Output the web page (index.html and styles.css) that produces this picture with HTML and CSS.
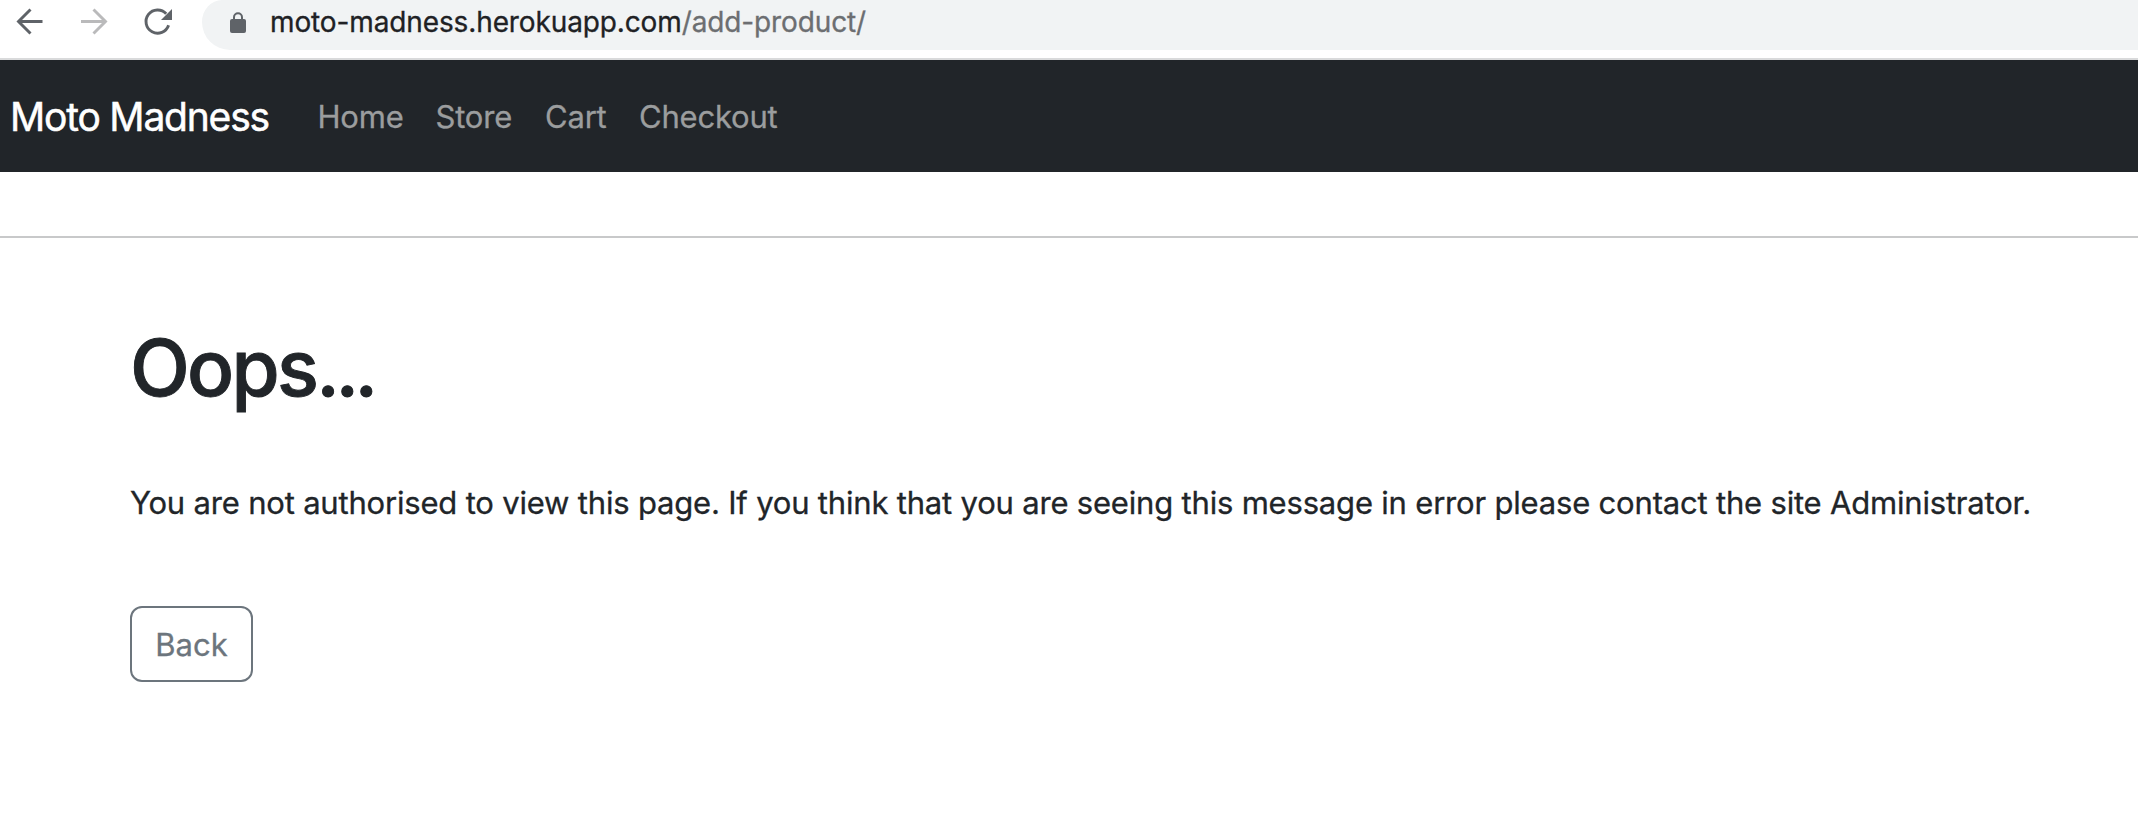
FILE: index.html
```html
<!DOCTYPE html>
<html lang="en">
<head>
<meta charset="utf-8">
<title>Moto Madness</title>
<link rel="stylesheet" href="styles.css">
</head>
<body>
<div class="toolbar">
  <svg class="controls" width="176" height="50" viewBox="0 0 176 50" fill="none">
    <path d="M42.5 21.5H19M30.5 9.5L18.5 21.5L30.5 33.5" stroke="#5f6368" stroke-width="2.9"/>
    <path d="M81 21.5H105.500M93.500 9.500L105.500 21.500L93.500 33.500" stroke="#bababb" stroke-width="2.900"/>
    <path d="M168.600 25.300A11.600 11.600 0 1 1 166.200 13.800" stroke="#5f6368" stroke-width="2.900"/>
    <path d="M172 9V20H161Z" fill="#5f6368"/>
  </svg>
  <div class="address">
    <svg class="lock" width="16" height="22" viewBox="0 0 16 22">
      <path d="M4 8V5.200a4 4 0 0 1 8 0V8" fill="none" stroke="#5f6368" stroke-width="2"/>
      <rect y="7" width="16" height="14" rx="2" fill="#5f6368"/>
    </svg>
    <div class="url"><span class="host">moto-madness.herokuapp.com</span><span class="path">/add-product/</span></div>
  </div>
</div>
<nav class="navbar">
  <a class="brand">Moto Madness</a>
  <a class="link home">Home</a>
  <a class="link store">Store</a>
  <a class="link cart">Cart</a>
  <a class="link checkout">Checkout</a>
</nav>
<hr class="rule">
<main class="content">
  <h1 class="title">Oops<span class="dots">...</span></h1>
  <p class="message">You are not authorised to view this page. If you think that you are seeing this message in error please contact the site Administrator.</p>
  <button class="back">Back</button>
</main>
</body>
</html>
```

FILE: styles.css
```css
* { box-sizing: border-box; }
body {
  margin: 0;
  background: #fff;
  color: #212529;
  font-family: Inter, "Liberation Sans", sans-serif;
  -webkit-text-stroke: 0.3px currentColor;
  overflow: hidden;
}
.toolbar {
  display: flex;
  height: 60px;
  border-bottom: 2px solid #d9dadb;
}
.controls { flex: none; margin-right: 26px; }
.address {
  display: flex;
  flex: 1;
  height: 50px;
  padding: 12px 0 0 28px;
  background: #f1f3f4;
  border-bottom-left-radius: 28px 28px;
  border-top-left-radius: 20px 22px;
}
.lock { flex: none; margin-right: 24px; }
.url {
  margin-top: -7px;
  font-size: 28px;
  line-height: 34px;
  letter-spacing: -0.12px;
  white-space: nowrap;
}
.host { color: #202124; }
.path { color: #6c6e71; }
.navbar {
  display: flex;
  align-items: center;
  height: 112px;
  padding-left: 10px;
  background: #212529;
  white-space: nowrap;
}
.brand {
  width: 307.5px;
  color: #fff;
  font-size: 39px;
  letter-spacing: -1.2px;
  -webkit-text-stroke-width: 0.5px;
}
.link {
  color: #9b9d9e;
  font-size: 31px;
  letter-spacing: -0.2px;
}
.home { width: 118px; }
.store { width: 109.5px; }
.cart { width: 94px; }
.rule {
  margin: 64px 0 0;
  border: 0;
  border-top: 2px solid #c8c9ca;
}
.content { padding: 82px 0 0 130px; }
.title {
  margin: 0;
  font-size: 78px;
  font-weight: 500;
  letter-spacing: -2.7px;
  line-height: 96px;
  -webkit-text-stroke-width: 0.9px;
}
.dots { letter-spacing: -4.6px; }
.message {
  margin: 63px 0 0;
  font-size: 31px;
  letter-spacing: -0.19px;
  line-height: 48px;
  white-space: nowrap;
}
.back {
  display: block;
  width: 123px;
  height: 76px;
  margin-top: 79px;
  padding: 1px 0 0;
  border: 2px solid #6c757d;
  border-radius: 12px;
  background: transparent;
  color: #6c757d;
  font: 31px/48px Inter, "Liberation Sans", sans-serif;
}
```
